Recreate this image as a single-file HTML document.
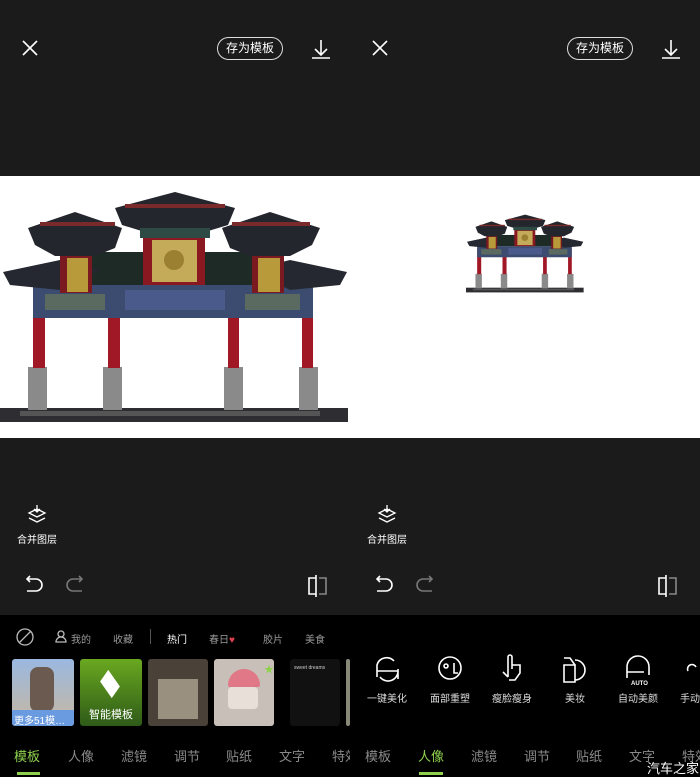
<!DOCTYPE html>
<html><head><meta charset="utf-8"><style>
*{margin:0;padding:0;box-sizing:border-box}
body{width:700px;height:777px;background:#1b1b1b;position:relative;overflow:hidden;font-family:"Liberation Sans","Noto Sans CJK SC",sans-serif;color:#fff}
.a{position:absolute}
.pill{border:1.5px solid #ddd;border-radius:12px;font-size:12px;line-height:20px;text-align:center;width:66px;height:23px}
.t{font-size:10px;color:#999;top:631px}
.tab{font-size:13px;color:#8a8a8a;top:746px}
.lab{font-size:10px;color:#ddd;top:690px;width:60px;text-align:center}
.th{top:659px;height:67px;border-radius:3px;overflow:hidden}
</style></head><body>
<div class="a" style="left:0;top:176px;width:700px;height:262px;background:#fff"></div>
<div class="a" style="left:0;top:615px;width:700px;height:162px;background:#000"></div>

<svg class="a" style="left:0;top:0" width="700" height="615">
<defs>
<g id="gate">
<rect x="0" y="218" width="348" height="14" fill="#2e2e32"/>
<rect x="20" y="221" width="300" height="5" fill="#555"/>
<g fill="#8a8a8a"><rect x="28" y="177" width="19" height="43"/><rect x="103" y="177" width="19" height="43"/><rect x="224" y="177" width="19" height="43"/><rect x="299" y="177" width="19" height="43"/></g>
<g fill="#a01826"><rect x="33" y="100" width="12" height="78"/><rect x="108" y="100" width="12" height="78"/><rect x="228" y="100" width="11" height="78"/><rect x="302" y="100" width="11" height="78"/></g>
<rect x="33" y="95" width="280" height="33" fill="#3c4c70"/>
<rect x="45" y="104" width="60" height="16" fill="#5a6a60"/><rect x="125" y="100" width="100" height="20" fill="#4a5a8a"/><rect x="245" y="104" width="55" height="16" fill="#5a6a60"/>
<rect x="90" y="62" width="170" height="33" fill="#1e2a26"/>
<path d="M3 82 L60 70 L100 80 L60 100 L10 95Z" fill="#252830"/>
<path d="M347 82 L290 70 L250 80 L290 100 L340 95Z" fill="#252830"/>
<rect x="60" y="65" width="32" height="38" fill="#7a1a20"/><rect x="67" y="68" width="21" height="34" fill="#b89a3a"/>
<rect x="252" y="65" width="32" height="38" fill="#7a1a20"/><rect x="258" y="68" width="22" height="34" fill="#b89a3a"/>
<rect x="143" y="45" width="62" height="50" fill="#8a1820"/><rect x="152" y="50" width="45" height="42" fill="#c4ab5a"/>
<circle cx="174" cy="70" r="10" fill="#9a8030"/>
<path d="M28 38 L75 22 L122 38 L115 58 L95 66 L55 66 L35 55Z" fill="#23262c"/>
<path d="M222 38 L270 22 L320 38 L312 55 L290 66 L250 66 L230 58Z" fill="#23262c"/>
<path d="M115 18 L175 2 L235 18 L228 35 L205 42 L145 42 L122 35Z" fill="#23262c"/>
<rect x="140" y="38" width="70" height="10" fill="#2e4a44"/>
<rect x="40" y="32" width="75" height="4" fill="#7a2a2a"/><rect x="232" y="32" width="78" height="4" fill="#7a2a2a"/><rect x="125" y="14" width="100" height="4" fill="#7a2a2a"/>
</g>
</defs>
<use href="#gate" transform="translate(0,190)"/>
<use href="#gate" transform="translate(466,214) scale(0.338)"/>
<g stroke="#fff" stroke-width="1.6" fill="none">
<path d="M23 41 L37 55 M37 41 L23 55"/><path d="M373 41 L387 55 M387 41 L373 55"/>
<path d="M321 40 V55 M315 49 L321 55 L327 49 M312 58 H330"/><path d="M671 40 V55 M665 49 L671 55 L677 49 M662 58 H680"/>
<path d="M29 513 L37 509 L45 513 L37 517Z M29 518 L37 522 L45 518 M37 505 V512 M34 509 L37 512 L40 509" stroke-width="1.3"/>
<path d="M379 513 L387 509 L395 513 L387 517Z M379 518 L387 522 L395 518 M387 505 V512 M384 509 L387 512 L390 509" stroke-width="1.3"/>
<path d="M30 582 L27 579 L30 576 M27 579 H36 A4 4 0 0 1 36 591 H27"/><path d="M380 582 L377 579 L380 576 M377 579 H386 A4 4 0 0 1 386 591 H377"/>
<path d="M79 582 L82 579 L79 576 M82 579 H73 A4 4 0 0 0 73 591 H82" stroke="#777"/><path d="M429 582 L432 579 L429 576 M432 579 H423 A4 4 0 0 0 423 591 H432" stroke="#777"/>
<path d="M316 578 H309 V594 H316 M316 575 V597"/><path d="M319 578 H326 V594 H319" stroke="#888"/>
<path d="M666 578 H659 V594 H666 M666 575 V597"/><path d="M669 578 H676 V594 H669" stroke="#888"/>
</g>
</svg>
<div class="a pill" style="left:217px;top:37px">存为模板</div>
<div class="a pill" style="left:567px;top:37px">存为模板</div>
<div class="a" style="left:17px;top:531px;font-size:10px">合并图层</div>
<div class="a" style="left:367px;top:531px;font-size:10px">合并图层</div>

<svg class="a" style="left:0;top:615px" width="700" height="162">
<g stroke="#bbb" stroke-width="1.3" fill="none"><circle cx="25" cy="22" r="8"/><path d="M19 28 L31 16"/><circle cx="61" cy="19" r="3"/><path d="M56 27 A5 5 0 0 1 66 27 Z"/></g>
<rect x="150" y="14" width="1" height="15" fill="#555"/>
<rect x="17" y="157" width="23" height="3" fill="#8fd14f"/><rect x="419" y="157" width="24" height="3" fill="#8fd14f"/>
<g stroke="#fff" stroke-width="1.6" fill="none">
<path d="M377 62 V50 A10 10 0 0 1 394 46 M377 56 H398 A10 10 0 0 1 380 62 M398 54 V64"/>
<circle cx="450" cy="53" r="11"/><circle cx="446" cy="51" r="2"/><path d="M454 48 V58 H458"/>
<path d="M508 62 L503 57 M508 62 V42 A2 2 0 0 1 512 42 V54 M512 50 H520 V58 L515 65 H509"/>
<path d="M564 50 V67 H575 V50 Z M564 43 H570 L575 50 M575 45 A10 10 0 0 1 575 65"/>
<path d="M627 63 V52 A11 11 0 0 1 649 52 V60 M627 57 H644"/>
<path d="M688 56 A4 4 0 1 1 696 52"/>
</g>
<text x="631" y="70" font-size="6" fill="#fff" font-family="Liberation Sans" font-weight="bold">AUTO</text>
</svg>

<div class="a t" style="left:71px">我的</div>
<div class="a t" style="left:113px">收藏</div>
<div class="a t" style="left:167px;color:#fff">热门</div>
<div class="a t" style="left:209px">春日<span style="color:#e04050">♥</span></div>
<div class="a t" style="left:263px">胶片</div>
<div class="a t" style="left:305px">美食</div>

<div class="a th" style="left:12px;width:62px;background:linear-gradient(#9ab8e0,#c8b8a0)"><div class="a" style="left:18px;top:8px;width:24px;height:45px;background:#6a5a50;border-radius:8px"></div><div class="a" style="left:0;bottom:0;width:62px;height:16px;background:#6a9ae0;font-size:10px;padding:2px 2px">更多51模…</div></div>
<div class="a th" style="left:80px;width:62px;background:linear-gradient(#6aa820,#2e5a18)"><div class="a" style="left:20px;top:18px;width:20px;height:14px;background:#fff;transform:rotate(45deg) skew(10deg,10deg)"></div><div class="a" style="left:0;bottom:4px;width:62px;text-align:center;font-size:11px">智能模板</div></div>
<div class="a th" style="left:148px;width:60px;background:#4a4238"><div class="a" style="left:10px;top:20px;width:40px;height:40px;background:#9a9080"></div></div>
<div class="a th" style="left:214px;width:60px;background:#c8c0b8"><div class="a" style="left:14px;top:10px;width:32px;height:18px;background:#e07888;border-radius:16px 16px 2px 2px"></div><div class="a" style="left:14px;top:28px;width:30px;height:22px;background:#e8e0d8;border-radius:4px"></div><div class="a" style="left:50px;top:2px;color:#8fd14f;font-size:10px">★</div></div>
<div class="a th" style="left:290px;width:50px;background:#111"><div class="a" style="left:4px;top:6px;font-size:5px;color:#ccc">sweet dreams</div></div>
<div class="a th" style="left:346px;width:4px;background:#887"></div>

<div class="a tab" style="left:14px;color:#8fd14f">模板</div>
<div class="a tab" style="left:68px">人像</div>
<div class="a tab" style="left:121px">滤镜</div>
<div class="a tab" style="left:174px">调节</div>
<div class="a tab" style="left:226px">贴纸</div>
<div class="a tab" style="left:279px">文字</div>
<div class="a tab" style="left:332px;width:18px;overflow:hidden;white-space:nowrap">特效</div>
<div class="a tab" style="left:365px">模板</div>
<div class="a tab" style="left:418px;color:#8fd14f">人像</div>
<div class="a tab" style="left:471px">滤镜</div>
<div class="a tab" style="left:524px">调节</div>
<div class="a tab" style="left:576px">贴纸</div>
<div class="a tab" style="left:629px">文字</div>
<div class="a tab" style="left:682px;width:18px;overflow:hidden;white-space:nowrap">特效</div>

<div class="a lab" style="left:357px">一键美化</div>
<div class="a lab" style="left:420px">面部重塑</div>
<div class="a lab" style="left:482px">瘦脸瘦身</div>
<div class="a lab" style="left:545px">美妆</div>
<div class="a lab" style="left:608px">自动美颜</div>
<div class="a lab" style="left:670px;text-align:left;padding-left:10px;white-space:nowrap">手动</div>
<div class="a" style="left:647px;top:758px;font-size:13px;color:#fff">汽车之家</div>
</body></html>
